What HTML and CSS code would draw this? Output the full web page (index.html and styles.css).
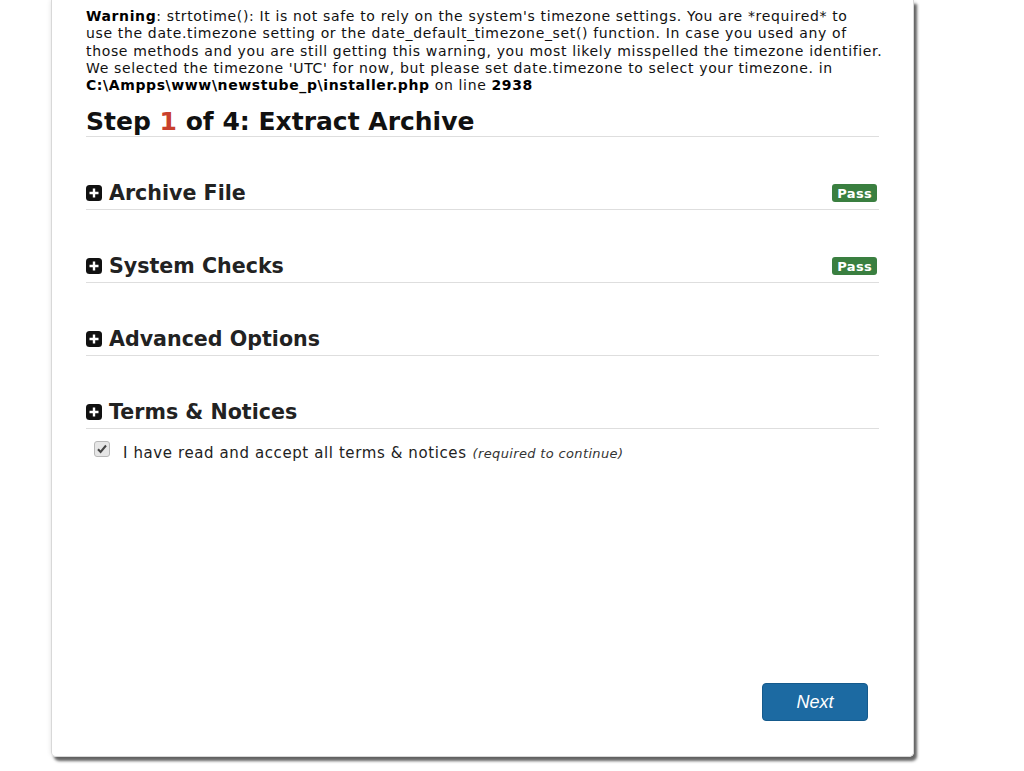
FILE: index.html
```html
<!DOCTYPE html>
<html>
<head>
<meta charset="utf-8">
<link rel="stylesheet" href="styles.css">
</head>
<body>
<div class="card">
  <div class="warning"><b>Warning</b>: strtotime(): It is not safe to rely on the system's timezone settings. You are *required* to<br>use the date.timezone setting or the date_default_timezone_set() function. In case you used any of<br>those methods and you are still getting this warning, you most likely misspelled the timezone identifier.<br>We selected the timezone 'UTC' for now, but please set date.timezone to select your timezone. in<br><b>C:\Ampps\www\newstube_p\installer.php</b> on line <b>2938</b></div>
  <h1 class="title">Step <span class="num">1</span> of 4: Extract Archive</h1>

  <div class="section">
    <div class="sec-head"><span class="plus"><svg width="16" height="16" viewBox="0 0 16 16"><rect x="0" y="0" width="16" height="16" rx="3.5" fill="#111"/><path d="M8 3.5v9M3.5 8h9" stroke="#fff" stroke-width="2.4"/></svg></span><span class="sec-title">Archive File</span><span class="badge">Pass</span></div>
  </div>
  <div class="section">
    <div class="sec-head"><span class="plus"><svg width="16" height="16" viewBox="0 0 16 16"><rect x="0" y="0" width="16" height="16" rx="3.5" fill="#111"/><path d="M8 3.5v9M3.5 8h9" stroke="#fff" stroke-width="2.4"/></svg></span><span class="sec-title">System Checks</span><span class="badge">Pass</span></div>
  </div>
  <div class="section">
    <div class="sec-head"><span class="plus"><svg width="16" height="16" viewBox="0 0 16 16"><rect x="0" y="0" width="16" height="16" rx="3.5" fill="#111"/><path d="M8 3.5v9M3.5 8h9" stroke="#fff" stroke-width="2.4"/></svg></span><span class="sec-title">Advanced Options</span></div>
  </div>
  <div class="section">
    <div class="sec-head"><span class="plus"><svg width="16" height="16" viewBox="0 0 16 16"><rect x="0" y="0" width="16" height="16" rx="3.5" fill="#111"/><path d="M8 3.5v9M3.5 8h9" stroke="#fff" stroke-width="2.4"/></svg></span><span class="sec-title">Terms &amp; Notices</span></div>
  </div>
  <label class="accept"><span class="chk"><svg width="16" height="16" viewBox="0 0 16 16"><rect x="0.5" y="0.5" width="15" height="15" rx="2.5" fill="#e6e6e6" stroke="#b8b8b8"/><path d="M4 8.2l2.6 2.8L12 4.5" fill="none" stroke="#444" stroke-width="2"/></svg></span><span class="accept-text">I have read and accept all terms &amp; notices</span> <i class="req">(required to continue)</i></label>

  <div class="footer"><button class="next">Next</button></div>
</div>
</body>
</html>
```
FILE: styles.css
```css
html, body {
  margin: 0;
  padding: 0;
  background: #fff;
}
body {
  font-family: "DejaVu Sans", Verdana, sans-serif;
  color: #000;
  width: 1024px;
  height: 771px;
  overflow: hidden;
}
.card {
  margin-left: 51px;
  width: 863px;
  height: 757px;
  box-sizing: border-box;
  border: 1px solid #d8d8d8;
  border-top: none;
  border-radius: 0 0 5px 5px;
  box-shadow: 3px 4px 3px rgba(0,0,0,0.6), 0 0 5px rgba(0,0,0,0.12);
  padding: 8px 34px 0 34px;
  display: flex;
  flex-direction: column;
}
.warning {
  font-size: 14px;
  letter-spacing: 0.65px;
  line-height: 17.3px;
  white-space: nowrap;
  color: #111;
}
.warning b { color: #000; letter-spacing: 0.6px; }
.title {
  font-size: 25px;
  font-weight: bold;
  margin: 14px 0 0 0;
  padding-bottom: 0;
  line-height: 28px;
  border-bottom: 1px solid #dedede;
  color: #111;
}
.num { color: #c9402c; }
.section {
  margin-top: 40px;
}
.sec-head {
  display: flex;
  align-items: center;
  border-bottom: 1px solid #dedede;
  height: 32px;
}
.plus {
  display: flex;
  width: 16px;
  height: 16px;
  margin-right: 7px;
}
.sec-title {
  font-size: 20.6px;
  font-weight: bold;
  color: #222;
  flex: 1;
}
.badge {
  background: #3a7f40;
  color: #fff;
  font-size: 13px;
  font-weight: bold;
  padding: 2px 5px 1px;
  border-radius: 3px;
  margin-right: 2px;
  line-height: 15px;
  letter-spacing: 0.3px;
}
.accept {
  display: flex;
  align-items: center;
  margin-top: 15px;
  padding-left: 8px;
  font-size: 15px;
  letter-spacing: 0.6px;
  color: #222;
}
.chk {
  display: flex;
  margin-right: 13px;
  margin-top: -8px;
}
.req {
  font-size: 13px;
  letter-spacing: 0.35px;
  margin-left: 6px;
  color: #333;
}
.footer {
  margin-top: auto;
  display: flex;
  justify-content: flex-end;
  padding-right: 11px;
  padding-bottom: 35px;
}
.next {
  width: 106px;
  height: 38px;
  background: #1c6aa2;
  color: #fff;
  border: 1px solid #155a8c;
  border-radius: 4px;
  font-family: "Liberation Sans", Arial, sans-serif;
  font-style: italic;
  font-size: 18px;
}
```
